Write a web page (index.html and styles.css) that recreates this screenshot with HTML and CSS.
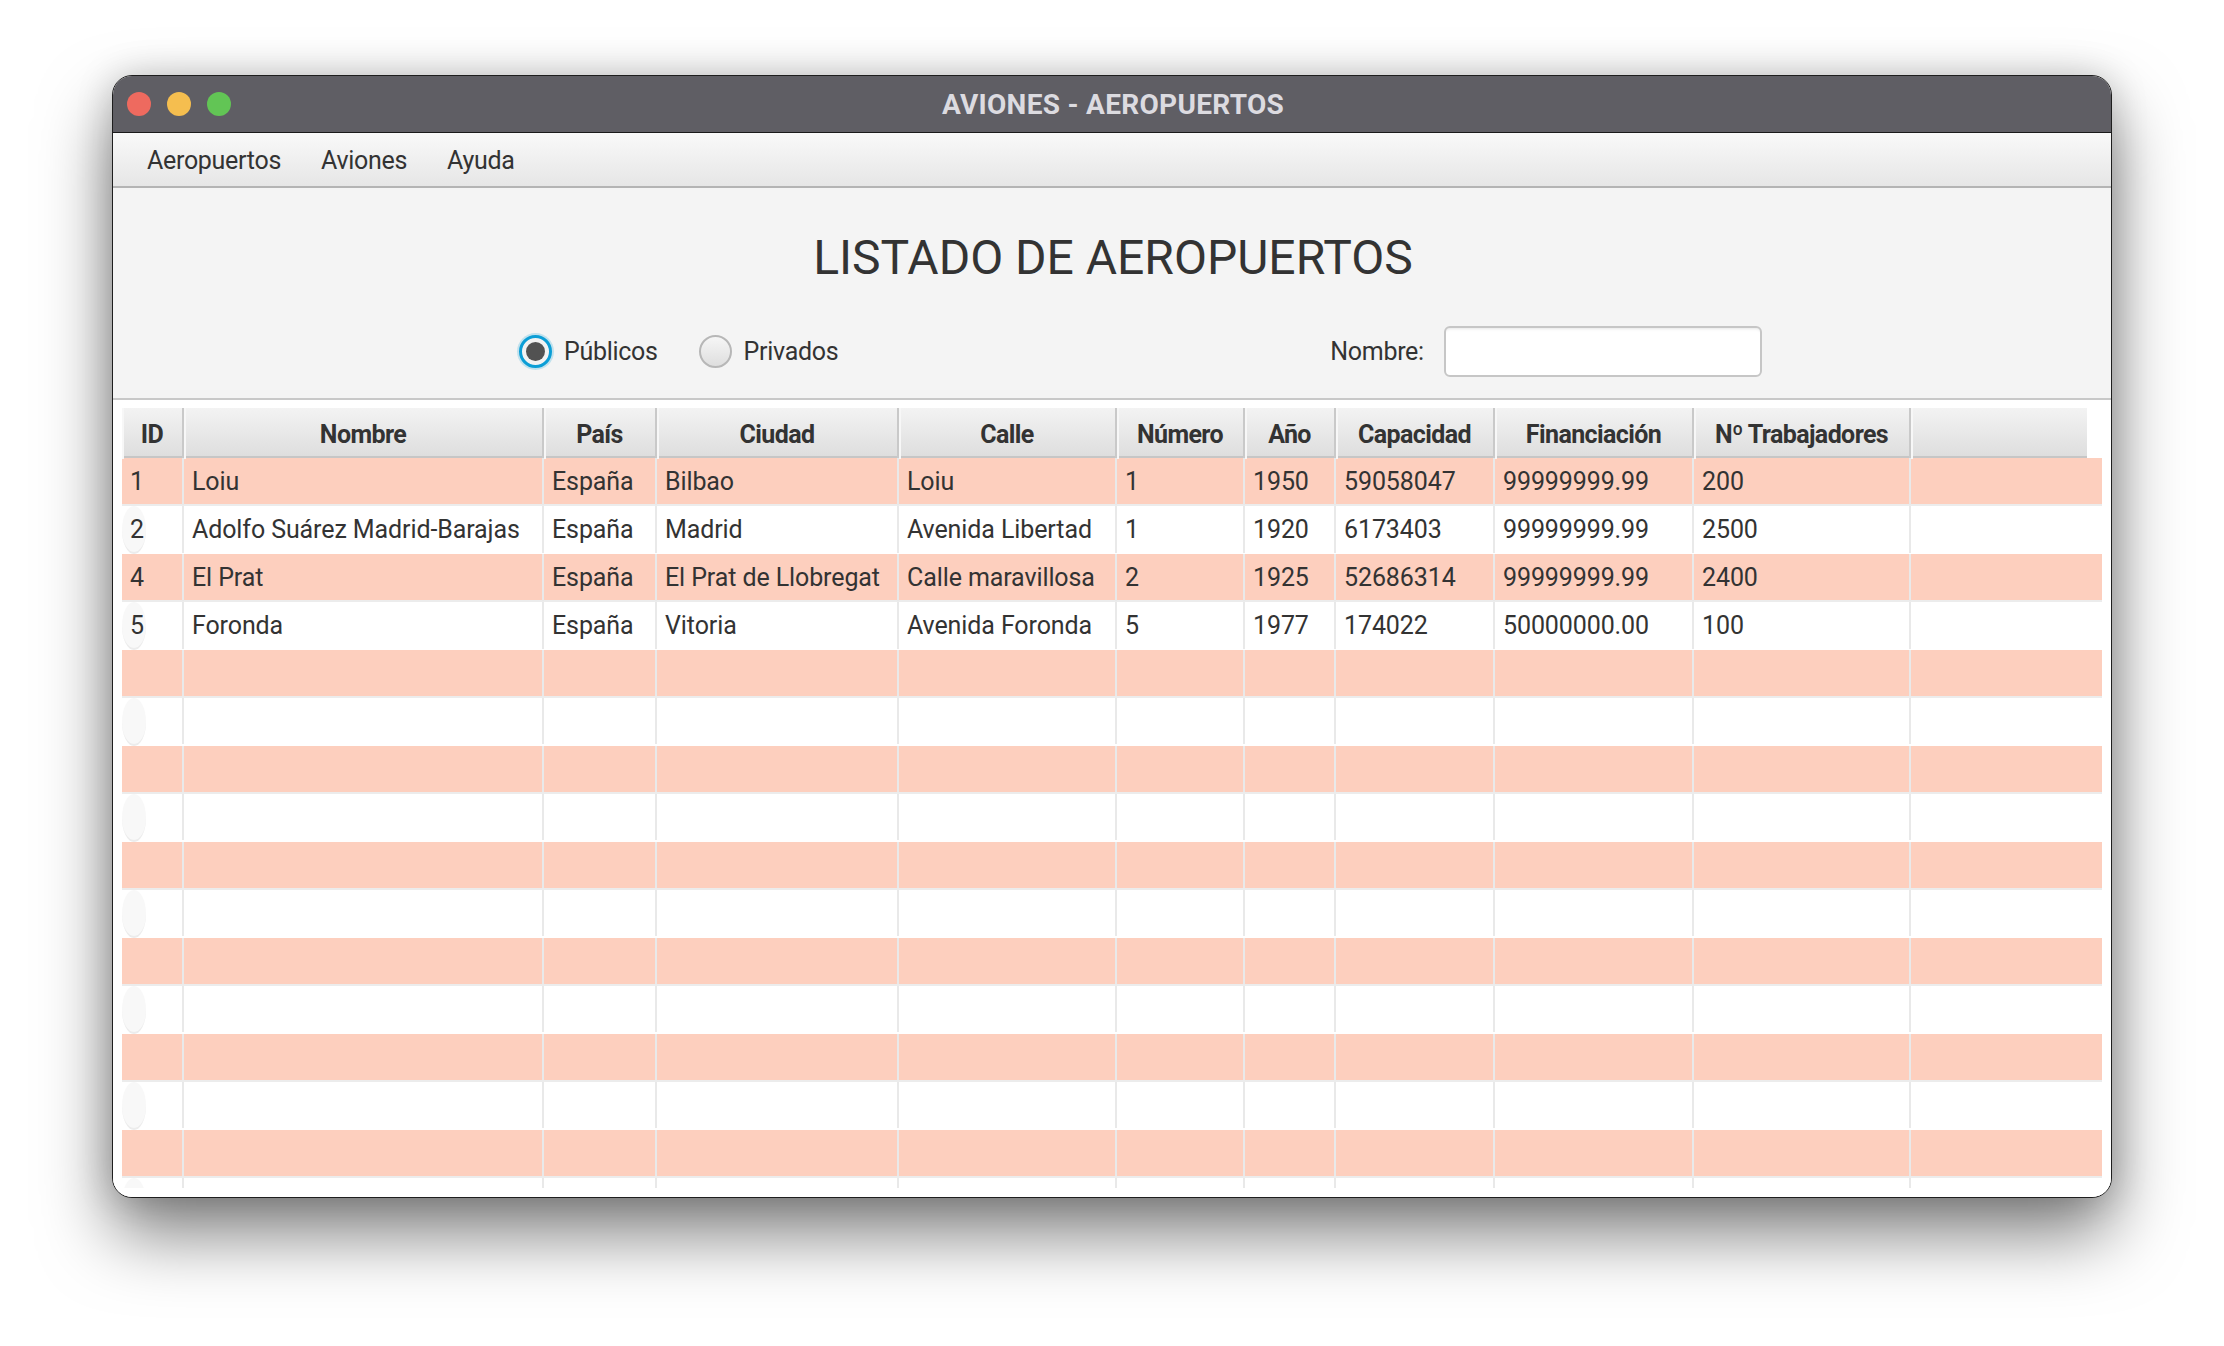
FILE: index.html
```html
<!DOCTYPE html>
<html lang="es">
<head>
<meta charset="utf-8">
<title>AVIONES - AEROPUERTOS</title>
<link rel="stylesheet" href="styles.css">
</head>
<body>
<div class="window">
  <header class="titlebar">
    <div class="lights">
      <span class="light red"></span>
      <span class="light yellow"></span>
      <span class="light green"></span>
    </div>
    <div class="title">AVIONES - AEROPUERTOS</div>
    <div></div>
  </header>
  <nav class="menubar">
    <span class="menu-item">Aeropuertos</span>
    <span class="menu-item">Aviones</span>
    <span class="menu-item">Ayuda</span>
  </nav>
  <section class="top">
    <h1 class="heading">LISTADO DE AEROPUERTOS</h1>
    <div class="filters">
      <label class="radio-option"><span class="radio selected"></span><span>Públicos</span></label>
      <label class="radio-option"><span class="radio"></span><span>Privados</span></label>
      <div class="name-filter"><span>Nombre:</span><span class="textfield"></span></div>
    </div>
  </section>
  <section class="table-area">
    <div class="table">
      <div class="thead">
        <div class="hrow">
          <div class="hcell">ID</div>
          <div class="hcell">Nombre</div>
          <div class="hcell">País</div>
          <div class="hcell">Ciudad</div>
          <div class="hcell">Calle</div>
          <div class="hcell">Número</div>
          <div class="hcell">Año</div>
          <div class="hcell">Capacidad</div>
          <div class="hcell">Financiación</div>
          <div class="hcell">Nº Trabajadores</div>
          <div class="hcell filler"></div>
        </div>
      </div>
      <div class="tbody">
        <div class="row pink"><div class="cell">1</div><div class="cell">Loiu</div><div class="cell">España</div><div class="cell">Bilbao</div><div class="cell">Loiu</div><div class="cell">1</div><div class="cell">1950</div><div class="cell">59058047</div><div class="cell">99999999.99</div><div class="cell">200</div><div class="cell last"></div></div>
        <div class="row light"><div class="cell">2</div><div class="cell">Adolfo Suárez Madrid-Barajas</div><div class="cell">España</div><div class="cell">Madrid</div><div class="cell">Avenida Libertad</div><div class="cell">1</div><div class="cell">1920</div><div class="cell">6173403</div><div class="cell">99999999.99</div><div class="cell">2500</div><div class="cell last"></div></div>
        <div class="row pink"><div class="cell">4</div><div class="cell">El Prat</div><div class="cell">España</div><div class="cell">El Prat de Llobregat</div><div class="cell">Calle maravillosa</div><div class="cell">2</div><div class="cell">1925</div><div class="cell">52686314</div><div class="cell">99999999.99</div><div class="cell">2400</div><div class="cell last"></div></div>
        <div class="row light"><div class="cell">5</div><div class="cell">Foronda</div><div class="cell">España</div><div class="cell">Vitoria</div><div class="cell">Avenida Foronda</div><div class="cell">5</div><div class="cell">1977</div><div class="cell">174022</div><div class="cell">50000000.00</div><div class="cell">100</div><div class="cell last"></div></div>
        <div class="row pink"><div class="cell"></div><div class="cell"></div><div class="cell"></div><div class="cell"></div><div class="cell"></div><div class="cell"></div><div class="cell"></div><div class="cell"></div><div class="cell"></div><div class="cell"></div><div class="cell last"></div></div>
        <div class="row light"><div class="cell"></div><div class="cell"></div><div class="cell"></div><div class="cell"></div><div class="cell"></div><div class="cell"></div><div class="cell"></div><div class="cell"></div><div class="cell"></div><div class="cell"></div><div class="cell last"></div></div>
        <div class="row pink"><div class="cell"></div><div class="cell"></div><div class="cell"></div><div class="cell"></div><div class="cell"></div><div class="cell"></div><div class="cell"></div><div class="cell"></div><div class="cell"></div><div class="cell"></div><div class="cell last"></div></div>
        <div class="row light"><div class="cell"></div><div class="cell"></div><div class="cell"></div><div class="cell"></div><div class="cell"></div><div class="cell"></div><div class="cell"></div><div class="cell"></div><div class="cell"></div><div class="cell"></div><div class="cell last"></div></div>
        <div class="row pink"><div class="cell"></div><div class="cell"></div><div class="cell"></div><div class="cell"></div><div class="cell"></div><div class="cell"></div><div class="cell"></div><div class="cell"></div><div class="cell"></div><div class="cell"></div><div class="cell last"></div></div>
        <div class="row light"><div class="cell"></div><div class="cell"></div><div class="cell"></div><div class="cell"></div><div class="cell"></div><div class="cell"></div><div class="cell"></div><div class="cell"></div><div class="cell"></div><div class="cell"></div><div class="cell last"></div></div>
        <div class="row pink"><div class="cell"></div><div class="cell"></div><div class="cell"></div><div class="cell"></div><div class="cell"></div><div class="cell"></div><div class="cell"></div><div class="cell"></div><div class="cell"></div><div class="cell"></div><div class="cell last"></div></div>
        <div class="row light"><div class="cell"></div><div class="cell"></div><div class="cell"></div><div class="cell"></div><div class="cell"></div><div class="cell"></div><div class="cell"></div><div class="cell"></div><div class="cell"></div><div class="cell"></div><div class="cell last"></div></div>
        <div class="row pink"><div class="cell"></div><div class="cell"></div><div class="cell"></div><div class="cell"></div><div class="cell"></div><div class="cell"></div><div class="cell"></div><div class="cell"></div><div class="cell"></div><div class="cell"></div><div class="cell last"></div></div>
        <div class="row light"><div class="cell"></div><div class="cell"></div><div class="cell"></div><div class="cell"></div><div class="cell"></div><div class="cell"></div><div class="cell"></div><div class="cell"></div><div class="cell"></div><div class="cell"></div><div class="cell last"></div></div>
        <div class="row pink"><div class="cell"></div><div class="cell"></div><div class="cell"></div><div class="cell"></div><div class="cell"></div><div class="cell"></div><div class="cell"></div><div class="cell"></div><div class="cell"></div><div class="cell"></div><div class="cell last"></div></div>
        <div class="row light"><div class="cell"></div><div class="cell"></div><div class="cell"></div><div class="cell"></div><div class="cell"></div><div class="cell"></div><div class="cell"></div><div class="cell"></div><div class="cell"></div><div class="cell"></div><div class="cell last"></div></div>
      </div>
    </div>
  </section>
</div>
</body>
</html>
```

FILE: styles.css
```css
* { box-sizing: border-box; }

html, body {
  margin: 0;
  padding: 0;
}

body {
  width: 2224px;
  height: 1346px;
  background: #ffffff;
  padding: 75px 112px 0 112px;
  font-family: Roboto, "Noto Sans", "DejaVu Sans", sans-serif;
  color: #333333;
  overflow: hidden;
}

.window {
  width: 2000px;
  height: 1123px;
  border: 1px solid #1e1e1e;
  border-radius: 20px;
  overflow: hidden;
  background: #f4f4f4;
  box-shadow: 0 36px 70px rgba(0, 0, 0, 0.5), 0 0 36px rgba(0, 0, 0, 0.18);
}

/* title bar */
.titlebar {
  height: 57px;
  background: #5f5e64;
  border-bottom: 1px solid #1a1a1a;
  display: grid;
  grid-template-columns: 1fr auto 1fr;
  align-items: center;
}

.lights {
  display: flex;
  gap: 16px;
  padding-left: 14px;
}

.light {
  width: 24px;
  height: 24px;
  border-radius: 50%;
}
.red { background: #ee6a5f; }
.yellow { background: #f5be4f; }
.green { background: #62c555; }

.title {
  color: #dcdbe0;
  font-weight: 700;
  font-size: 28px;
  letter-spacing: 0.3px;
  padding-left: 2px;
}

/* menu bar */
.menubar {
  height: 55px;
  background: linear-gradient(#f9f9f9, #e6e6e6);
  border-bottom: 2px solid #b4b4b4;
  display: flex;
  align-items: center;
  padding-left: 14px;
  padding-top: 2px;
  font-size: 25px;
  color: #333;
}

.menu-item {
  padding: 0 20px;
  letter-spacing: -0.3px;
}

/* top section */
.top {
  height: 210px;
  padding-top: 40px;
}

.heading {
  margin: 0;
  text-align: center;
  font-weight: 400;
  font-size: 48px;
  line-height: 60px;
  color: #333;
  padding-left: 2px;
}

.filters {
  margin-top: 38px;
  height: 51px;
  display: flex;
  align-items: center;
  padding-left: 406px;
  font-size: 25px;
  letter-spacing: -0.3px;
  color: #333;
}

.radio-option {
  display: flex;
  align-items: center;
  gap: 12px;
}

.radio-option + .radio-option {
  margin-left: 41px;
}

.radio {
  width: 33px;
  height: 33px;
  border-radius: 50%;
  border: 2px solid #b7b7b7;
  background: linear-gradient(#f6f6f6, #dedede);
  display: flex;
  align-items: center;
  justify-content: center;
}

.radio.selected {
  border: 3px solid #0b9ed6;
  background: #f2f2f2;
  box-shadow: 0 0 0 2px rgba(11, 158, 214, 0.22);
}

.radio.selected::after {
  content: "";
  width: 19px;
  height: 19px;
  border-radius: 50%;
  background: #525252;
}

.name-filter {
  margin-left: 492px;
  display: flex;
  align-items: center;
  gap: 20px;
}

.textfield {
  width: 318px;
  height: 51px;
  border: 2px solid #c6c6c6;
  border-radius: 6px;
  background: #ffffff;
  box-shadow: inset 0 4px 3px -3px rgba(0, 0, 0, 0.1);
}

/* table */
.table-area {
  border-top: 2px solid #c8c8c8;
  background: #ffffff;
  padding: 8px 9px 10px 9px;
  height: 800px;
}

.table {
  width: 1980px;
  font-size: 25px;
  letter-spacing: -0.1px;
  color: #333;
}

.thead {
  padding-right: 15px;
  background: #ffffff;
}

.hrow,
.row {
  display: grid;
  grid-template-columns: 62px 360px 113px 242px 218px 128px 91px 159px 199px 217px 1fr;
}

.hrow {
  height: 50px;
  background: linear-gradient(#f3f3f3, #dedede);
  border-bottom: 2px solid #c6c6c6;
}

.hcell {
  border-right: 2px solid #c9c9c9;
  box-shadow: inset 2px 0 0 #f7f7f7;
  font-weight: 700;
  text-align: center;
  line-height: 48px;
  padding-top: 3px;
  letter-spacing: -0.6px;
  white-space: nowrap;
}

.hcell.filler {
  border-right: none;
}

.tbody {
  height: 730px;
  overflow: hidden;
}

.row {
  height: 48px;
  border-bottom: 2px solid #ececec;
}

.row.pink { background: #fdcfbe; }
.row.light { background: #f8f8f8; }

.cell {
  border-right: 2px solid #e9e9e9;
  padding-left: 8px;
  padding-top: 1px;
  line-height: 46px;
  white-space: nowrap;
}

.cell.last {
  border-right: none;
}
```
